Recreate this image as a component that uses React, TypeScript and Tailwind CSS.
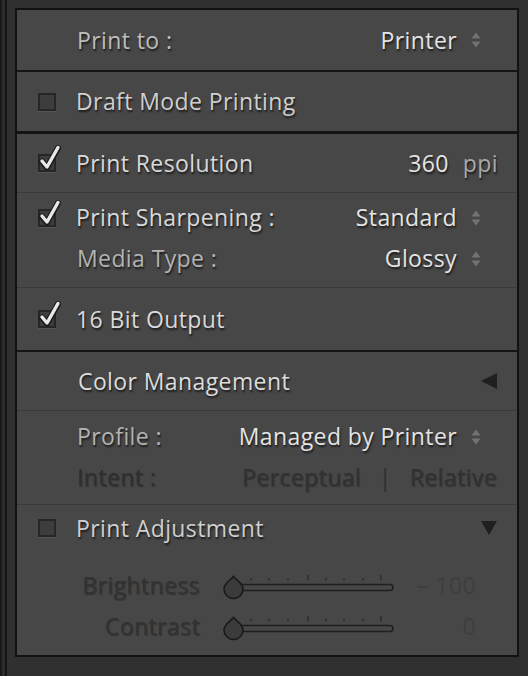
// Print settings panel — Lightroom-style dark side panel.
const SHADOW = "[text-shadow:1px_2px_2px_rgba(0,0,0,0.65)]";
const DIM = "[text-shadow:1px_1px_1px_rgba(0,0,0,0.3)]";

function Stepper() {
  return (
    <svg width="10" height="18" viewBox="0 0 10 18" className="ml-[14px] shrink-0">
      <path d="M0.5 7.5 L5 1.5 L9.5 7.5 Z" fill="#727272" />
      <path d="M0.5 10.5 L5 16.5 L9.5 10.5 Z" fill="#727272" />
    </svg>
  );
}

function Check({ on }: { on: boolean }) {
  return (
    <div className="relative mr-[20px] h-[18px] w-[18px] shrink-0 border-2 border-[#262626] bg-[#3d3d3d] shadow-[0_1px_0_rgba(255,255,255,0.08)]">
      {on && (
        <svg width="28" height="30" viewBox="0 0 28 30" className="absolute left-[-3px] top-[-12px]">
          <path d="M5 17.5 L10 23.5 L21 4" fill="none" stroke="#1c1c1c" strokeWidth="6" strokeLinecap="round" strokeLinejoin="round" />
          <path d="M5 17 L10 23 L21 3.5" fill="none" stroke="#e8e8e8" strokeWidth="3.4" strokeLinecap="round" strokeLinejoin="round" />
        </svg>
      )}
    </div>
  );
}

function Slider() {
  const ticks = [32, 50, 69, 89, 107, 125, 144, 162];
  const tall = [89, 162];
  return (
    <svg width="180" height="30" viewBox="0 0 180 30" className="ml-[19px] shrink-0">
      {ticks.map(t => (
        <line key={t} x1={t} x2={t} y1={tall.includes(t) ? 4 : 7} y2="9.5" stroke="#2b2b2b" strokeWidth="1.4" />
      ))}
      <rect x="20" y="13.5" width="154" height="6" rx="3" fill="#474747" stroke="#1f1f1f" strokeWidth="1.6" />
      <path d="M14.5 5.5 C17 9, 24 12, 24 18 A9.5 9.5 0 0 1 5 18 C5 12, 12 9, 14.5 5.5 Z" fill="#3b3b3b" stroke="#1a1a1a" strokeWidth="1.6" />
    </svg>
  );
}

function Divider() {
  return <div className="h-px bg-[#3a3a3a]" />;
}

function SectionBreak({ h = 2 }: { h?: number }) {
  return <div className={h === 3 ? "h-[3px] bg-[#141414]" : "h-[2px] bg-[#141414]"} />;
}

export default function App() {
  return (
    <div className="flex h-[676px] w-[528px] overflow-hidden bg-[#303030] text-[23px] tracking-[0.4px] font-['Open_Sans',sans-serif]">
      <div className="w-[2px] bg-[#191919]" />
      <div className="w-[3px] bg-[#2c2c2c]" />
      <div className="w-[2px] bg-[#141414]" />
      <div className="flex-1 pl-[8px] pt-[8px]">
        <div className="w-[504px] border-2 border-[#121212] bg-[#474747]">
          {/* Print to */}
          <div className="flex h-[60px] items-center pl-[60px] pr-[36px]">
            <span className={`text-[#bdbdbd] ${SHADOW}`}>Print to :</span>
            <span className={`ml-auto text-[#e4e4e4] ${SHADOW}`}>Printer</span>
            <Stepper />
          </div>
          <SectionBreak />

          {/* Draft */}
          <div className="flex h-[59px] items-center pl-[21px]">
            <Check on={false} />
            <span className={`text-[#cfcfcf] ${SHADOW}`}>Draft Mode Printing</span>
          </div>
          <SectionBreak h={3} />

          {/* Resolution / sharpening / bit depth */}
          <div className="flex h-[58px] items-center pl-[21px] pr-[19px]">
            <Check on />
            <span className={`text-[#d9d9d9] ${SHADOW}`}>Print Resolution</span>
            <span className={`ml-auto text-[#e4e4e4] ${SHADOW}`}>360</span>
            <span className={`ml-[14px] text-[#a9a9a9] ${SHADOW}`}>ppi</span>
          </div>
          <Divider />
          <div className="flex h-[94px] flex-col pt-[4px]">
            <div className="flex h-[41px] items-center pl-[21px] pr-[36px]">
              <Check on />
              <span className={`text-[#d9d9d9] ${SHADOW}`}>Print Sharpening :</span>
              <span className={`ml-auto text-[#e4e4e4] ${SHADOW}`}>Standard</span>
              <Stepper />
            </div>
            <div className="flex h-[41px] items-center pl-[60px] pr-[36px]">
              <span className={`text-[#b3b3b3] ${SHADOW}`}>Media Type :</span>
              <span className={`ml-auto text-[#e4e4e4] ${SHADOW}`}>Glossy</span>
              <Stepper />
            </div>
          </div>
          <Divider />
          <div className="flex h-[62px] items-center pl-[21px]">
            <Check on />
            <span className={`text-[#d9d9d9] ${SHADOW}`}>16 Bit Output</span>
          </div>
          <SectionBreak />

          {/* Color management */}
          <div className="flex h-[58px] items-center pl-[61px] pr-[19px]">
            <span className={`text-[#dcdcdc] ${SHADOW}`}>Color Management</span>
            <svg width="18" height="18" viewBox="0 0 18 18" className="ml-auto">
              <path d="M17 1 L1 9 L17 17 Z" fill="#1f1f1f" />
            </svg>
          </div>
          <Divider />
          <div className="flex h-[93px] flex-col pt-[5px]">
            <div className="flex h-[41px] items-center pl-[60px] pr-[36px]">
              <span className={`text-[#b3b3b3] ${SHADOW}`}>Profile :</span>
              <span className={`ml-auto text-[#e4e4e4] ${SHADOW}`}>Managed by Printer</span>
              <Stepper />
            </div>
            <div className="flex h-[41px] items-center pl-[60px] pr-[20px]">
              <span className={`w-[165px] text-[#2e2e2e] ${DIM}`}>Intent :</span>
              <span className={`text-[#313131] ${DIM}`}>Perceptual</span>
              <span className="flex-1 text-center text-[#2e2e2e]">|</span>
              <span className={`text-[#313131] ${DIM}`}>Relative</span>
            </div>
          </div>
          <Divider />
          <div className="flex h-[150px] flex-col">
            <div className="flex h-[46px] items-center pl-[21px] pr-[19px]">
              <Check on={false} />
              <span className={`text-[#cfcfcf] ${SHADOW}`}>Print Adjustment</span>
              <svg width="18" height="18" viewBox="0 0 18 18" className="ml-auto">
                <path d="M1 2 L17 2 L9 16 Z" fill="#1f1f1f" />
              </svg>
            </div>
            <div className="mt-[14px] flex h-[41px] items-center">
              <span className={`w-[183px] text-right text-[#323232] ${DIM}`}>Brightness</span>
              <Slider />
              <span className="w-[77px] text-right text-[#3e3e3e]">– 100</span>
            </div>
            <div className="flex h-[41px] items-center">
              <span className={`w-[183px] text-right text-[#323232] ${DIM}`}>Contrast</span>
              <Slider />
              <span className="w-[77px] text-right text-[#3e3e3e]">0</span>
            </div>
          </div>
        </div>
      </div>
    </div>
  );
}
